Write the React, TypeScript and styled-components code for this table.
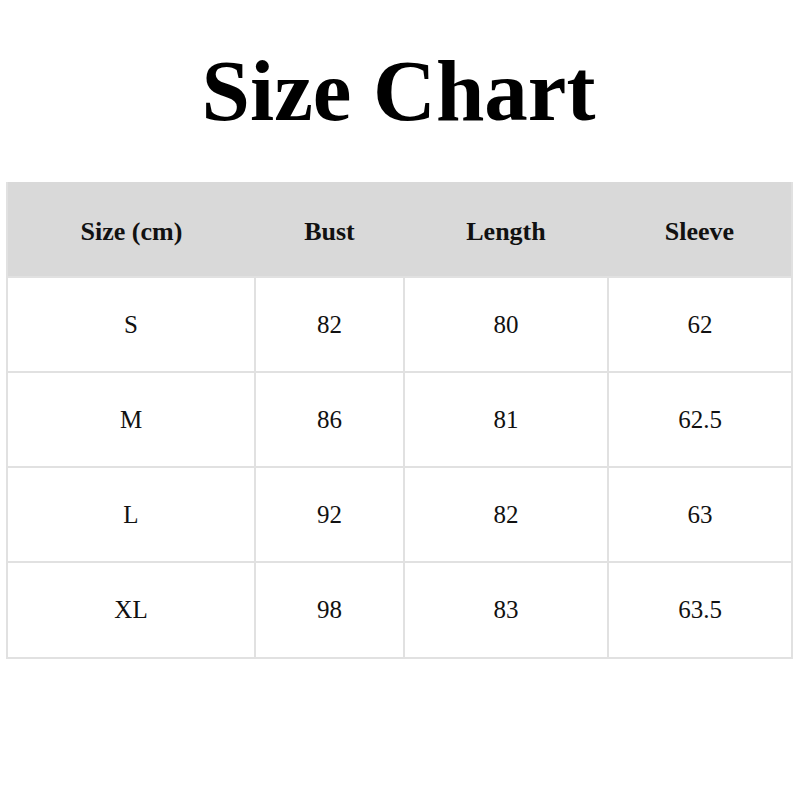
import React from "react";
import styled, { createGlobalStyle } from "styled-components";

const Global = createGlobalStyle`
  html, body { margin: 0; padding: 0; background: #fff; }
  body { font-family: "Liberation Serif", "Times New Roman", serif; color: #111; }
`;

const Page = styled.div`
  width: 800px;
  height: 800px;
  padding: 0 9px 0 6px;
  box-sizing: border-box;
  display: flex;
  flex-direction: column;
`;

const Title = styled.h1`
  margin: 0;
  height: 182px;
  display: flex;
  align-items: center;
  justify-content: center;
  font-size: 87px;
  font-weight: 700;
  color: #000;
  padding-bottom: 2px;
  box-sizing: border-box;
`;

const Table = styled.table`
  width: 785px;
  border-collapse: collapse;
  table-layout: fixed;
  border: 2px solid #e1e1e1;
  border-top: none;
`;

const HeadCell = styled.th`
  height: 89px;
  background: #d9d9d9;
  font-size: 26px;
  font-weight: 700;
  color: #111;
  text-align: center;
  padding: 5px 0 0;
  border-bottom: 2px solid #e1e1e1;
`;

const Cell = styled.td<{ $last?: boolean }>`
  height: ${(p) => (p.$last ? "94px" : "93px")};
  font-size: 25px;
  text-align: center;
  padding: 0;
  border: 2px solid #e1e1e1;
  color: #111;
`;

const cols = [248, 149, 204, 184];
const headers = ["Size (cm)", "Bust", "Length", "Sleeve"];
const rows = [
  ["S", "82", "80", "62"],
  ["M", "86", "81", "62.5"],
  ["L", "92", "82", "63"],
  ["XL", "98", "83", "63.5"],
];

export default function App() {
  return (
    <>
      <Global />
      <Page>
        <Title>Size Chart</Title>
        <Table>
          <colgroup>
            {cols.map((w, i) => (
              <col key={i} style={{ width: w }} />
            ))}
          </colgroup>
          <thead>
            <tr>
              {headers.map((h) => (
                <HeadCell key={h}>{h}</HeadCell>
              ))}
            </tr>
          </thead>
          <tbody>
            {rows.map((r, i) => (
              <tr key={i}>
                {r.map((c, j) => (
                  <Cell key={j} $last={i === rows.length - 1}>
                    {c}
                  </Cell>
                ))}
              </tr>
            ))}
          </tbody>
        </Table>
      </Page>
    </>
  );
}
